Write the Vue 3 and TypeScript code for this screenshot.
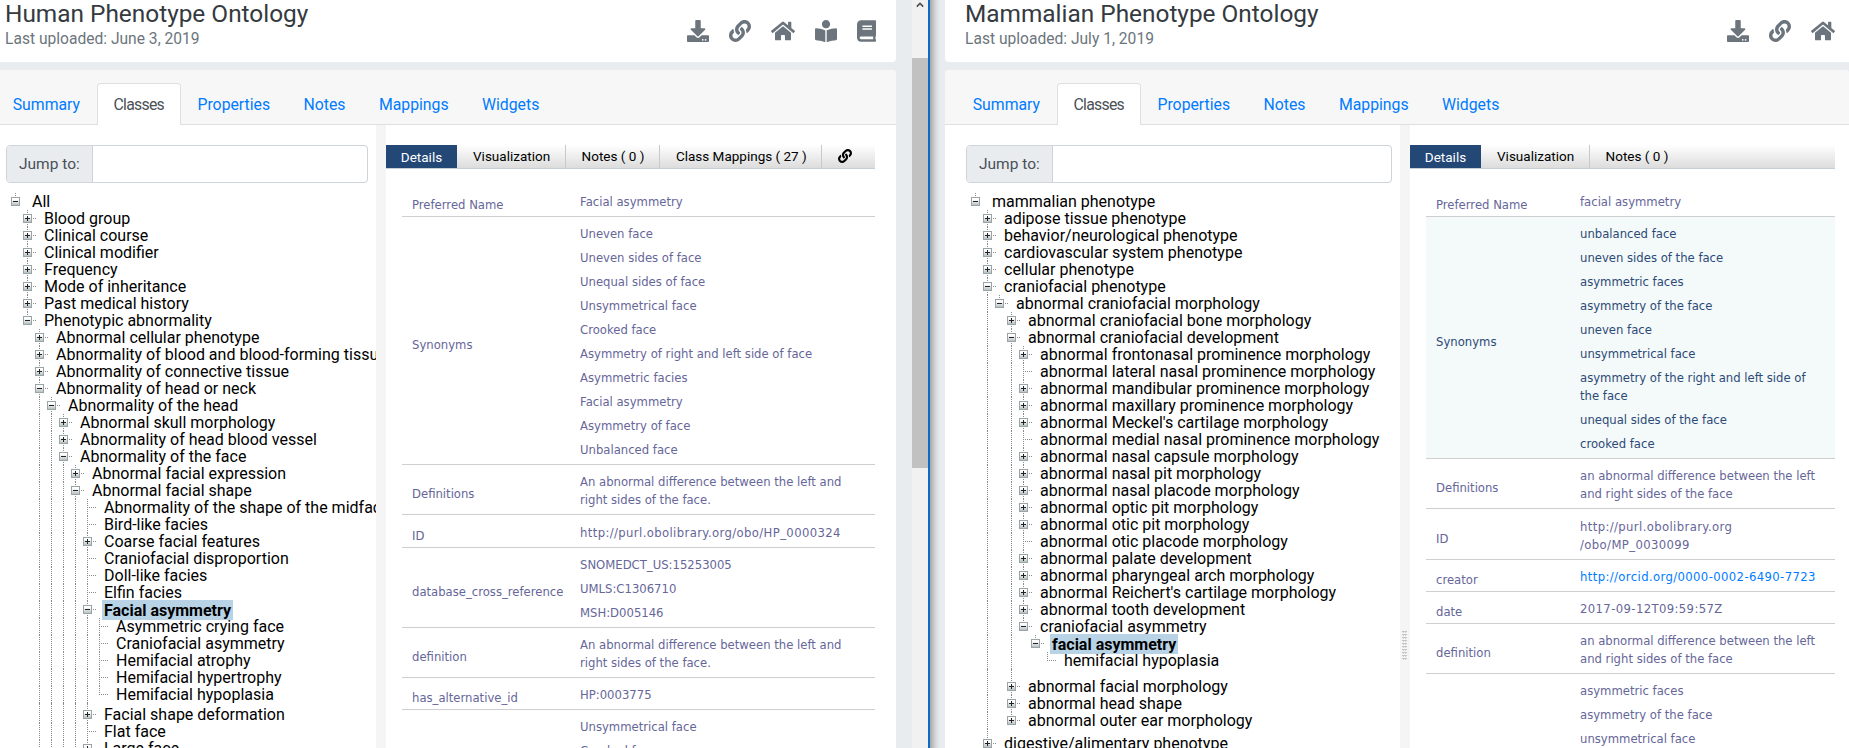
<script setup lang="ts">
interface TreeRow {
  level: number
  kind: '+' | '-' | ''
  text: string
  selected?: boolean
}

interface DetailRow {
  label: string
  values: string[]
  hover?: boolean
  extraTop?: boolean
  link?: boolean
}

interface Panel {
  key: string
  title: string
  uploaded: string
  tabs: string[]
  rows: TreeRow[]
  details: DetailRow[]
}

const r = (level: number, kind: TreeRow['kind'], text: string, selected = false): TreeRow => ({ level, kind, text, selected })

const hpoTree: TreeRow[] = [
  r(0, '-', 'All'),
  r(1, '+', 'Blood group'),
  r(1, '+', 'Clinical course'),
  r(1, '+', 'Clinical modifier'),
  r(1, '+', 'Frequency'),
  r(1, '+', 'Mode of inheritance'),
  r(1, '+', 'Past medical history'),
  r(1, '-', 'Phenotypic abnormality'),
  r(2, '+', 'Abnormal cellular phenotype'),
  r(2, '+', 'Abnormality of blood and blood-forming tissue'),
  r(2, '+', 'Abnormality of connective tissue'),
  r(2, '-', 'Abnormality of head or neck'),
  r(3, '-', 'Abnormality of the head'),
  r(4, '+', 'Abnormal skull morphology'),
  r(4, '+', 'Abnormality of head blood vessel'),
  r(4, '-', 'Abnormality of the face'),
  r(5, '+', 'Abnormal facial expression'),
  r(5, '-', 'Abnormal facial shape'),
  r(6, '', 'Abnormality of the shape of the midface'),
  r(6, '', 'Bird-like facies'),
  r(6, '+', 'Coarse facial features'),
  r(6, '', 'Craniofacial disproportion'),
  r(6, '', 'Doll-like facies'),
  r(6, '', 'Elfin facies'),
  r(6, '-', 'Facial asymmetry', true),
  r(7, '', 'Asymmetric crying face'),
  r(7, '', 'Craniofacial asymmetry'),
  r(7, '', 'Hemifacial atrophy'),
  r(7, '', 'Hemifacial hypertrophy'),
  r(7, '', 'Hemifacial hypoplasia'),
  r(6, '+', 'Facial shape deformation'),
  r(6, '', 'Flat face'),
  r(6, '+', 'Large face'),
  r(6, '', 'Long face'),
  r(5, '+', 'Abnormality of the midface'),
  r(4, '+', 'Abnormality of the mouth'),
  r(3, '+', 'Abnormality of the neck'),
  r(2, '+', 'Abnormality of the eye')
]

const mpTree: TreeRow[] = [
  r(0, '-', 'mammalian phenotype'),
  r(1, '+', 'adipose tissue phenotype'),
  r(1, '+', 'behavior/neurological phenotype'),
  r(1, '+', 'cardiovascular system phenotype'),
  r(1, '+', 'cellular phenotype'),
  r(1, '-', 'craniofacial phenotype'),
  r(2, '-', 'abnormal craniofacial morphology'),
  r(3, '+', 'abnormal craniofacial bone morphology'),
  r(3, '-', 'abnormal craniofacial development'),
  r(4, '+', 'abnormal frontonasal prominence morphology'),
  r(4, '', 'abnormal lateral nasal prominence morphology'),
  r(4, '+', 'abnormal mandibular prominence morphology'),
  r(4, '+', 'abnormal maxillary prominence morphology'),
  r(4, '+', "abnormal Meckel's cartilage morphology"),
  r(4, '', 'abnormal medial nasal prominence morphology'),
  r(4, '+', 'abnormal nasal capsule morphology'),
  r(4, '+', 'abnormal nasal pit morphology'),
  r(4, '+', 'abnormal nasal placode morphology'),
  r(4, '+', 'abnormal optic pit morphology'),
  r(4, '+', 'abnormal otic pit morphology'),
  r(4, '', 'abnormal otic placode morphology'),
  r(4, '+', 'abnormal palate development'),
  r(4, '+', 'abnormal pharyngeal arch morphology'),
  r(4, '+', "abnormal Reichert's cartilage morphology"),
  r(4, '+', 'abnormal tooth development'),
  r(4, '-', 'craniofacial asymmetry'),
  r(5, '-', 'facial asymmetry', true),
  r(6, '', 'hemifacial hypoplasia'),
  r(3, '+', 'abnormal facial morphology'),
  r(3, '+', 'abnormal head shape'),
  r(3, '+', 'abnormal outer ear morphology'),
  r(1, '+', 'digestive/alimentary phenotype'),
  r(1, '+', 'embryo phenotype')
]

const panels: Panel[] = [
  {
    key: 'left',
    title: 'Human Phenotype Ontology',
    uploaded: 'Last uploaded: June 3, 2019',
    tabs: ['Visualization', 'Notes ( 0 )', 'Class Mappings ( 27 )'],
    rows: hpoTree,
    details: [
      { label: 'Preferred Name', values: ['Facial asymmetry'] },
      {
        label: 'Synonyms',
        values: [
          'Uneven face',
          'Uneven sides of face',
          'Unequal sides of face',
          'Unsymmetrical face',
          'Crooked face',
          'Asymmetry of right and left side of face',
          'Asymmetric facies',
          'Facial asymmetry',
          'Asymmetry of face',
          'Unbalanced face'
        ]
      },
      { label: 'Definitions', values: ['An abnormal difference between the left and\nright sides of the face.'] },
      { label: 'ID', values: ['http://purl.obolibrary.org/obo/HP_0000324'], extraTop: true },
      { label: 'database_cross_reference', values: ['SNOMEDCT_US:15253005', 'UMLS:C1306710', 'MSH:D005146'] },
      { label: 'definition', values: ['An abnormal difference between the left and\nright sides of the face.'] },
      { label: 'has_alternative_id', values: ['HP:0003775'] },
      {
        label: 'has_exact_synonym',
        values: [
          'Unsymmetrical face',
          'Crooked face',
          'Uneven face',
          'Unequal sides of face',
          'Asymmetric facies',
          'Facial asymmetry',
          'Asymmetry of face',
          'Unbalanced face'
        ]
      }
    ]
  },
  {
    key: 'right',
    title: 'Mammalian Phenotype Ontology',
    uploaded: 'Last uploaded: July 1, 2019',
    tabs: ['Visualization', 'Notes ( 0 )'],
    rows: mpTree,
    details: [
      { label: 'Preferred Name', values: ['facial asymmetry'] },
      {
        label: 'Synonyms',
        hover: true,
        values: [
          'unbalanced face',
          'uneven sides of the face',
          'asymmetric faces',
          'asymmetry of the face',
          'uneven face',
          'unsymmetrical face',
          'asymmetry of the right and left side of\nthe face',
          'unequal sides of the face',
          'crooked face'
        ]
      },
      { label: 'Definitions', values: ['an abnormal difference between the left\nand right sides of the face'] },
      { label: 'ID', values: ['http://purl.obolibrary.org\n/obo/MP_0030099'], extraTop: true },
      { label: 'creator', values: ['http://orcid.org/0000-0002-6490-7723'], link: true },
      { label: 'date', values: ['2017-09-12T09:59:57Z'] },
      { label: 'definition', values: ['an abnormal difference between the left\nand right sides of the face'] },
      {
        label: 'has_exact_synonym',
        values: [
          'asymmetric faces',
          'asymmetry of the face',
          'unsymmetrical face',
          'uneven face',
          'unequal sides of the face',
          'crooked face'
        ]
      }
    ]
  }
]

const mainTabs = ['Summary', 'Classes', 'Properties', 'Notes', 'Mappings', 'Widgets']

// a vertical dotted line runs on while a later sibling at that level is still to come
function hasLaterSibling(rows: TreeRow[], index: number, level: number) {
  for (let i = index + 1; i < rows.length; i++) {
    if (rows[i].level < level) return false
    if (rows[i].level === level) return true
  }
  return false
}

function guides(rows: TreeRow[], index: number) {
  const row = rows[index]
  const list: { level: number; end: boolean }[] = []
  for (let g = 0; g <= row.level; g++) {
    const later = hasLaterSibling(rows, index, g)
    if (later) list.push({ level: g, end: false })
    else if (g === row.level) list.push({ level: g, end: true })
  }
  return list
}

function gap(rows: TreeRow[], index: number) {
  if (index === 0) return 0
  const drop = rows[index - 1].level - rows[index].level
  return drop > 0 ? drop * 3 : 0
}

const isWide = (value: string) => /^(http|\/obo|2017)/.test(value)
</script>

<template>
  <div class="page">
    <template v-for="(panel, index) in panels" :key="panel.key">
      <section class="pane" :class="'pane-' + panel.key">
        <div class="inner">
          <header class="head">
            <div>
              <h1 class="title">{{ panel.title }}</h1>
              <p class="uploaded">{{ panel.uploaded }}</p>
            </div>
            <div class="head-icons">
              <svg class="icon" viewBox="0 0 512 512"><path d="M216 0h80c13.3 0 24 10.7 24 24v168h87.7c17.8 0 26.7 21.5 14.1 34.1L269.7 378.3c-7.5 7.5-19.8 7.5-27.3 0L90.1 226.1c-12.6-12.6-3.7-34.1 14.1-34.1H192V24c0-13.3 10.7-24 24-24zm296 376v112c0 13.3-10.7 24-24 24H24c-13.3 0-24-10.7-24-24V376c0-13.3 10.7-24 24-24h146.7l49 49c20.1 20.1 52.5 20.1 72.6 0l49-49H488c13.3 0 24 10.7 24 24zm-124 88c0-11-9-20-20-20s-20 9-20 20 9 20 20 20 20-9 20-20zm64 0c0-11-9-20-20-20s-20 9-20 20 9 20 20 20 20-9 20-20z" /></svg>
              <svg class="icon" viewBox="0 0 512 512"><path d="M326.612 185.391c59.747 59.809 58.927 155.698.36 214.59-.11.12-.24.25-.36.37l-67.2 67.2c-59.27 59.27-155.699 59.262-214.96 0-59.27-59.26-59.27-155.7 0-214.96l37.106-37.106c9.84-9.84 26.786-3.3 27.294 10.606.648 17.722 3.826 35.527 9.69 52.721 1.986 5.822.567 12.262-3.783 16.612l-13.087 13.087c-28.026 28.026-28.905 73.66-1.155 101.96 28.024 28.579 74.086 28.749 102.325.51l67.2-67.19c28.191-28.191 28.073-73.757 0-101.83-3.701-3.694-7.429-6.564-10.341-8.569a16.037 16.037 0 0 1-6.947-12.606c-.396-10.567 3.348-21.456 11.698-29.806l21.054-21.055c5.521-5.521 14.182-6.199 20.584-1.731a152.482 152.482 0 0 1 20.522 17.197zM467.547 44.449c-59.261-59.262-155.69-59.27-214.96 0l-67.2 67.2c-.12.12-.25.25-.36.37-58.566 58.892-59.387 154.781.36 214.59a152.454 152.454 0 0 0 20.521 17.196c6.402 4.468 15.064 3.789 20.584-1.731l21.054-21.055c8.35-8.35 12.094-19.239 11.698-29.806a16.037 16.037 0 0 0-6.947-12.606c-2.912-2.005-6.64-4.875-10.341-8.569-28.073-28.073-28.191-73.639 0-101.83l67.2-67.19c28.239-28.239 74.3-28.069 102.325.51 27.75 28.3 26.872 73.934-1.155 101.96l-13.087 13.087c-4.35 4.35-5.769 10.79-3.783 16.612 5.864 17.194 9.042 34.999 9.69 52.721.509 13.906 17.454 20.446 27.294 10.606l37.106-37.106c59.271-59.259 59.271-155.699.001-214.959z" /></svg>
              <svg class="icon icon-home" viewBox="0 0 576 512"><path d="M280.37 148.26L96 300.11V464a16 16 0 0 0 16 16l112.06-.29a16 16 0 0 0 15.92-16V368a16 16 0 0 1 16-16h64a16 16 0 0 1 16 16v95.64a16 16 0 0 0 16 16.05L464 480a16 16 0 0 0 16-16V300L295.67 148.26a12.19 12.19 0 0 0-15.3 0zM571.6 251.47L488 182.56V44.05a12 12 0 0 0-12-12h-56a12 12 0 0 0-12 12v72.61L318.47 43a48 48 0 0 0-61 0L4.34 251.47a12 12 0 0 0-1.6 16.9l25.5 31A12 12 0 0 0 45.15 301l235.22-193.74a12.19 12.19 0 0 1 15.3 0L530.9 301a12 12 0 0 0 16.9-1.6l25.5-31a12 12 0 0 0-1.7-16.93z" /></svg>
              <svg class="icon" viewBox="0 0 512 512"><path d="M352 96c0-53.02-42.98-96-96-96s-96 42.98-96 96 42.98 96 96 96 96-42.98 96-96zM233.59 241.1c-59.33-36.32-155.43-46.3-203.79-49.05C13.55 191.13 0 203.51 0 219.14v222.8c0 14.33 11.59 26.28 26.49 27.05 43.66 2.29 131.99 10.68 193.04 41.43 9.37 4.72 20.48-1.71 20.48-11.87V252.56c-.01-4.67-2.32-8.95-6.42-11.46zm248.61-49.05c-48.35 2.74-144.46 12.73-203.78 49.05-4.1 2.51-6.41 6.96-6.41 11.63v245.79c0 10.19 11.14 16.63 20.54 11.9 61.04-30.72 149.32-39.11 192.97-41.4 14.9-.78 26.49-12.73 26.49-27.06V219.14c-.01-15.63-13.56-28.01-29.81-27.09z" /></svg>
              <svg class="icon icon-book" viewBox="0 0 448 512"><path d="M448 360V24c0-13.3-10.7-24-24-24H96C43 0 0 43 0 96v320c0 53 43 96 96 96h328c13.3 0 24-10.7 24-24v-16c0-7.5-3.5-14.3-8.9-18.7-4.2-15.4-4.2-59.3 0-74.7 5.4-4.3 8.9-11.1 8.9-18.6zM128 134c0-3.3 2.7-6 6-6h212c3.3 0 6 2.7 6 6v20c0 3.3-2.7 6-6 6H134c-3.3 0-6-2.7-6-6v-20zm0 64c0-3.3 2.7-6 6-6h212c3.3 0 6 2.7 6 6v20c0 3.3-2.7 6-6 6H134c-3.3 0-6-2.7-6-6v-20zm253.4 250H96c-17.7 0-32-14.3-32-32 0-17.6 14.4-32 32-32h285.4c-1.9 17.1-1.9 46.9 0 64z" /></svg>
            </div>
          </header>

          <div class="card">
            <nav class="tabs">
              <a v-for="tab in mainTabs" :key="tab" class="tab" :class="{ active: tab === 'Classes' }">{{ tab }}</a>
            </nav>
            <div class="body">
              <div class="tree-col">
                <div class="jump">
                  <span class="jump-label">Jump to:</span>
                  <span class="jump-input"></span>
                </div>
                <ul class="tree">
                  <li
                    v-for="(row, i) in panel.rows"
                    :key="i"
                    class="node"
                    :style="{ paddingTop: gap(panel.rows, i) + 'px', paddingLeft: 32 + row.level * 12 + 'px' }"
                  >
                    <i
                      v-for="g in guides(panel.rows, i)"
                      :key="g.level"
                      class="guide"
                      :class="{ end: g.end }"
                      :style="{ left: 15 + g.level * 12 + 'px' }"
                    ></i>
                    <i v-if="row.level > 0" class="dash" :style="{ left: 15 + row.level * 12 + 'px' }"></i>
                    <i
                      v-if="row.kind"
                      class="box"
                      :class="{ plus: row.kind === '+' }"
                      :style="{ left: 11 + row.level * 12 + 'px' }"
                    ></i>
                    <span :class="{ selected: row.selected }">{{ row.text }}</span>
                  </li>
                </ul>
              </div>

              <div class="splitter">
                <i v-if="panel.key === 'right'" class="grip"></i>
              </div>

              <div class="detail">
                <div class="bar">
                  <span class="bar-tab current">Details</span>
                  <span v-for="tab in panel.tabs" :key="tab" class="bar-tab">{{ tab }}</span>
                  <span v-if="panel.key === 'left'" class="bar-tab bar-link">
                    <svg viewBox="0 0 512 512"><path d="M326.612 185.391c59.747 59.809 58.927 155.698.36 214.59-.11.12-.24.25-.36.37l-67.2 67.2c-59.27 59.27-155.699 59.262-214.96 0-59.27-59.26-59.27-155.7 0-214.96l37.106-37.106c9.84-9.84 26.786-3.3 27.294 10.606.648 17.722 3.826 35.527 9.69 52.721 1.986 5.822.567 12.262-3.783 16.612l-13.087 13.087c-28.026 28.026-28.905 73.66-1.155 101.96 28.024 28.579 74.086 28.749 102.325.51l67.2-67.19c28.191-28.191 28.073-73.757 0-101.83-3.701-3.694-7.429-6.564-10.341-8.569a16.037 16.037 0 0 1-6.947-12.606c-.396-10.567 3.348-21.456 11.698-29.806l21.054-21.055c5.521-5.521 14.182-6.199 20.584-1.731a152.482 152.482 0 0 1 20.522 17.197zM467.547 44.449c-59.261-59.262-155.69-59.27-214.96 0l-67.2 67.2c-.12.12-.25.25-.36.37-58.566 58.892-59.387 154.781.36 214.59a152.454 152.454 0 0 0 20.521 17.196c6.402 4.468 15.064 3.789 20.584-1.731l21.054-21.055c8.35-8.35 12.094-19.239 11.698-29.806a16.037 16.037 0 0 0-6.947-12.606c-2.912-2.005-6.64-4.875-10.341-8.569-28.073-28.073-28.191-73.639 0-101.83l67.2-67.19c28.239-28.239 74.3-28.069 102.325.51 27.75 28.3 26.872 73.934-1.155 101.96l-13.087 13.087c-4.35 4.35-5.769 10.79-3.783 16.612 5.864 17.194 9.042 34.999 9.69 52.721.509 13.906 17.454 20.446 27.294 10.606l37.106-37.106c59.271-59.259 59.271-155.699.001-214.959z" /></svg>
                  </span>
                </div>
                <div class="table">
                  <div
                    v-for="row in panel.details"
                    :key="row.label"
                    class="row"
                    :class="{ hover: row.hover, 'extra-top': row.extraTop }"
                  >
                    <div class="label">{{ row.label }}</div>
                    <div class="values">
                      <div
                        v-for="value in row.values"
                        :key="value"
                        class="value"
                        :class="{ link: row.link, wide: isWide(value) }"
                      >{{ value }}</div>
                    </div>
                  </div>
                </div>
              </div>
            </div>
          </div>
        </div>
      </section>

      <div v-if="index === 0" class="scrollbar">
        <span class="arrow">
          <svg viewBox="0 0 10 6"><path d="M1 5l4-4 4 4" /></svg>
        </span>
        <span class="thumb"></span>
      </div>
      <div v-if="index === 0" class="rule"></div>
    </template>
  </div>
</template>

<style>
html,
body {
  margin: 0;
  overflow: hidden;
}
</style>

<style scoped>
.page {
  display: flex;
  width: 1849px;
  height: 748px;
  overflow: hidden;
  background: #e9ecef;
  font-family: Roboto, "Liberation Sans", sans-serif;
  color: #212529;
}

.pane {
  flex: none;
  height: 748px;
  overflow: hidden;
}

.pane-left {
  width: 912px;
}

.pane-right {
  width: 919px;
  padding-left: 15px;
  box-sizing: border-box;
  background: linear-gradient(90deg, #a8a8a8, #d8dadc 6px, #e9ecef 10px);
}

.inner {
  width: 911px;
}

.pane-left .inner {
  margin-left: -15px;
}

.pane-right .inner {
  width: 904px;
}

.head {
  display: flex;
  justify-content: space-between;
  height: 62px;
  padding: 0 20px;
  box-sizing: border-box;
  background: #fff;
  border-radius: 0 0 4px 4px;
}

.pane-right .head {
  width: 991px;
}

.title {
  margin: -1px 0 0;
  font-size: 24.4px;
  font-weight: 400;
  line-height: 29px;
  color: #343a40;
}

.uploaded {
  margin: 1px 0 0;
  font-size: 15.6px;
  line-height: 20px;
  color: #6c757d;
}

.head-icons {
  display: flex;
  gap: 20px;
  padding-top: 20px;
}

.icon {
  width: 22px;
  height: 22px;
  fill: #6c757d;
}

.icon-home {
  width: 24px;
}

.icon-book {
  width: 19px;
}

.card {
  margin-top: 8px;
  height: 678px;
  background: #fff;
  border-radius: 4px 4px 0 0;
}

.tabs {
  display: flex;
  height: 55px;
  padding: 13px 0 0 11px;
  box-sizing: border-box;
  background: #f7f7f7;
  border-bottom: 1px solid #dfdfdf;
  border-radius: 4px 4px 0 0;
}

.tab {
  height: 41px;
  padding: 0 15.7px;
  border: 1px solid transparent;
  border-bottom: 0;
  box-sizing: border-box;
  font-size: 15.8px;
  line-height: 41px;
  color: #007bff;
}

.tab.active {
  height: 42px;
  background: #fff;
  border-color: #dfdfdf;
  border-radius: 4px 4px 0 0;
  letter-spacing: -0.7px;
  color: #495057;
}

.body {
  display: flex;
}

.tree-col {
  flex: none;
  box-sizing: border-box;
  width: 391px;
  overflow: hidden;
}

.pane-right .tree-col {
  width: 455px;
}

.jump {
  display: flex;
  height: 38px;
  margin: 20px 8px 0 21px;
  box-sizing: border-box;
  border: 1px solid #ced4da;
  border-radius: 4px;
  font-size: 15.5px;
}

.jump-label {
  width: 86px;
  box-sizing: border-box;
  padding-left: 12px;
  background: #e9ecef;
  border-right: 1px solid #ced4da;
  border-radius: 3px 0 0 3px;
  line-height: 36px;
  color: #495057;
}

.jump-input {
  flex: 1;
}

.tree {
  margin: 10px 0 0 15px;
  padding: 0;
  list-style: none;
  font-size: 16px;
  color: #000;
}

.node {
  position: relative;
  line-height: 17px;
  white-space: nowrap;
}

.guide {
  position: absolute;
  top: 0;
  bottom: 0;
  border-left: 1px dotted #8a8a8a;
}

.guide.end {
  bottom: 8px;
}

.dash {
  position: absolute;
  bottom: 8px;
  width: 9px;
  border-top: 1px dotted #8a8a8a;
}

.box {
  position: absolute;
  bottom: 4px;
  width: 9px;
  height: 9px;
  box-sizing: border-box;
  border: 1px solid #98a4a8;
  background: linear-gradient(180deg, #fff 20%, #b9c0c0);
}

.box::before {
  content: "";
  position: absolute;
  left: 1px;
  top: 3px;
  width: 5px;
  height: 1px;
  background: #222;
}

.box.plus::after {
  content: "";
  position: absolute;
  left: 3px;
  top: 1px;
  width: 1px;
  height: 5px;
  background: #222;
}

.selected {
  margin-left: -2px;
  padding: 0.5px 2px;
  background: #b8d3e6;
  font-weight: 700;
}

.splitter {
  position: relative;
  flex: none;
  width: 10px;
  height: 623px;
  background: #f5f5f5;
}

.grip {
  position: absolute;
  left: 2px;
  top: 505px;
  width: 5px;
  height: 30px;
  background-image: radial-gradient(circle, #c4c4c4 1px, transparent 1px);
  background-size: 2.5px 3px;
}

.detail {
  flex: none;
  width: 489px;
  padding-top: 20px;
  font-family: "DejaVu Sans", sans-serif;
}

.pane-right .detail {
  width: 425px;
}

.bar {
  display: flex;
  height: 24px;
  box-sizing: border-box;
  border-bottom: 1px solid #c3cfd9;
  background: linear-gradient(180deg, #fff, #dcdcdc);
  font-family: Roboto, "Liberation Sans", sans-serif;
  font-size: 13.5px;
  line-height: 23px;
  color: #000;
}

.bar-tab {
  flex: none;
  padding: 0 14.5px 0 16px;
  border-right: 1px solid #c9c9c9;
  white-space: nowrap;
}

.bar-tab:last-child {
  border-right: 0;
}

.bar-tab.current {
  width: 71px;
  box-sizing: border-box;
  padding: 1px 0 0;
  text-align: center;
  background: #234876;
  border-right: 0;
  color: #fff;
}

.bar-link svg {
  display: block;
  width: 14px;
  height: 14px;
  margin-top: 4px;
}

.table {
  margin: 16px 0 0 16px;
  font-size: 11.65px;
  color: #666699;
}

.row {
  display: grid;
  grid-template-columns: 178px 1fr;
  padding-top: 8px;
  border-bottom: 1px solid #cfcfcf;
}

.pane-right .row {
  grid-template-columns: 154px 1fr;
}

.row.extra-top {
  padding-top: 9px;
}

.row.hover {
  background: #f4f9f9;
  color: #2c4a78;
}

.label {
  align-self: center;
  padding-left: 10px;
  line-height: 18px;
}

.value {
  margin-bottom: 6px;
  line-height: 18px;
  white-space: pre-line;
}

.value:last-child {
  margin-bottom: 5px;
}

.value.wide {
  letter-spacing: 0.38px;
}

.value.link {
  color: #007bff;
}

.scrollbar {
  flex: none;
  display: flex;
  flex-direction: column;
  width: 16px;
  height: 748px;
  background: #f1f1f1;
}

.arrow {
  display: flex;
  justify-content: center;
  height: 58px;
  padding-top: 2px;
  box-sizing: border-box;
}

.arrow svg {
  width: 8px;
  height: 6px;
  fill: none;
  stroke: #505050;
  stroke-width: 2;
}

.thumb {
  height: 410px;
  background: #c1c1c1;
}

.rule {
  flex: none;
  width: 2px;
  height: 748px;
  background: #0a6cc4;
}
</style>
